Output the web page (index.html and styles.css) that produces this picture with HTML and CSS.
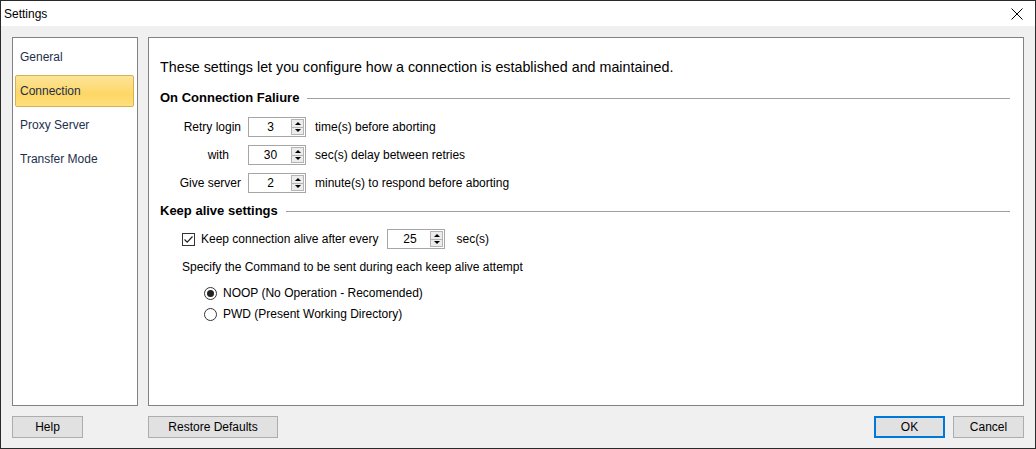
FILE: index.html
```html
<!DOCTYPE html>
<html>
<head>
<meta charset="utf-8">
<link rel="stylesheet" href="styles.css">
</head>
<body>
<div class="window">
  <div class="titlebar">
    <span class="title">Settings</span>
    <svg class="close" width="12" height="12" viewBox="0 0 12 12"><path d="M0.5 0.5 L11.5 11.5 M11.5 0.5 L0.5 11.5" stroke="#000" stroke-width="1" fill="none"/></svg>
  </div>
  <div class="client">
    <div class="panels">
      <div class="nav">
        <div class="nav-item">General</div>
        <div class="nav-item selected">Connection</div>
        <div class="nav-item">Proxy Server</div>
        <div class="nav-item">Transfer Mode</div>
      </div>
      <div class="main">
        <div class="intro">These settings let you configure how a connection is established and maintained.</div>
        <div class="section-head h1"><span>On Connection Faliure</span><div class="rule"></div></div>
        <div class="rows">
          <div class="row">
            <div class="lbl">Retry login</div>
            <div class="spin"><div class="val">3</div><div class="btns"><div class="b up"></div><div class="b down"></div></div></div>
            <div class="after">time(s) before aborting</div>
          </div>
          <div class="row">
            <div class="lbl with">with</div>
            <div class="spin"><div class="val">30</div><div class="btns"><div class="b up"></div><div class="b down"></div></div></div>
            <div class="after">sec(s) delay between retries</div>
          </div>
          <div class="row">
            <div class="lbl">Give server</div>
            <div class="spin"><div class="val">2</div><div class="btns"><div class="b up"></div><div class="b down"></div></div></div>
            <div class="after">minute(s) to respond before aborting</div>
          </div>
        </div>
        <div class="section-head h2"><span>Keep alive settings</span><div class="rule"></div></div>
        <div class="keep">
          <div class="check"><svg width="11" height="11" viewBox="0 0 11 11"><path d="M1.5 5.5 L4.2 8.2 L9.5 2.5" stroke="#222" stroke-width="1.2" fill="none"/></svg></div>
          <div class="keep-text">Keep connection alive after every</div>
          <div class="spin"><div class="val">25</div><div class="btns"><div class="b up"></div><div class="b down"></div></div></div>
          <div class="keep-after">sec(s)</div>
        </div>
        <div class="specify">Specify the Command to be sent during each keep alive attempt</div>
        <div class="radios">
          <div class="radio-row"><div class="radio on"></div><span>NOOP (No Operation - Recomended)</span></div>
          <div class="radio-row"><div class="radio"></div><span>PWD (Present Working Directory)</span></div>
        </div>
      </div>
    </div>
    <div class="buttons">
      <div class="btn help">Help</div>
      <div class="btn restore">Restore Defaults</div>
      <div class="spacer"></div>
      <div class="btn ok">OK</div>
      <div class="btn cancel">Cancel</div>
    </div>
  </div>
</div>
</body>
</html>
```

FILE: styles.css
```css
* { box-sizing: border-box; }
html, body { margin: 0; padding: 0; }
body {
  width: 1036px;
  height: 449px;
  font-family: "Liberation Sans", Arial, sans-serif;
  font-size: 12px;
  color: #000;
  overflow: hidden;
}
.window {
  width: 1036px;
  height: 449px;
  border: 1px solid #2a2a2a;
  display: flex;
  flex-direction: column;
  background: #f0f0f0;
}
.titlebar {
  height: 25px;
  background: #fff;
  display: flex;
  align-items: center;
  padding-left: 3px;
  padding-right: 12px;
}
.title { flex: 1; font-size: 12px; }
.close { display: block; }
.client {
  flex: 1;
  display: flex;
  flex-direction: column;
  padding: 11px 11px 0 11px;
}
.panels {
  display: flex;
  gap: 10px;
  height: 369px;
}
.nav {
  width: 126px;
  border: 1px solid #828282;
  background: #fff;
  padding-top: 3px;
  display: flex;
  flex-direction: column;
  gap: 2px;
}
.nav-item {
  height: 32px;
  margin: 0 3px 0 2px;
  padding-left: 4px;
  display: flex;
  align-items: center;
  color: #1e2f4d;
  border: 1px solid transparent;
  font-size: 12px;
}
.nav-item.selected {
  background: linear-gradient(#fde49a, #fdd766 60%, #fde07e);
  border: 1px solid #d7b254;
  border-radius: 2px;
}
.main {
  flex: 1;
  border: 1px solid #828282;
  background: #fff;
  padding: 20px 13px 0 11px;
  display: flex;
  flex-direction: column;
}
.intro {
  font-size: 14.3px;
  line-height: 18px;
  height: 18px;
}
.section-head {
  display: flex;
  align-items: center;
  font-weight: bold;
  font-size: 13px;
  line-height: 16px;
  height: 16px;
}
.section-head .rule {
  flex: 1;
  height: 1px;
  background: #a0a0a0;
  margin-left: 8px;
}
.h1 { margin-top: 14px; }
.h2 { margin-top: 10px; }
.rows {
  margin-top: 11px;
  display: flex;
  flex-direction: column;
  gap: 8px;
  padding-left: 10px;
}
.row {
  display: flex;
  align-items: center;
  height: 20px;
}
.lbl {
  width: 71px;
  text-align: right;
}
.lbl.with { padding-right: 12px; }
.row .spin { margin-left: 7px; }
.after { margin-left: 9px; }
.spin {
  width: 58px;
  height: 20px;
  border: 1px solid #a6a6a6;
  background: #fff;
  display: flex;
  font-size: 12px;
}
.val {
  flex: 1;
  display: flex;
  align-items: center;
  justify-content: center;
  padding-left: 1px;
}
.btns {
  width: 13px;
  margin: 1px 1px 1px 0;
  display: flex;
  flex-direction: column;
}
.b {
  flex: 1;
  background: #ececec;
  border: 1px solid #b4b4b4;
  display: flex;
  align-items: center;
  justify-content: center;
}
.b + .b { border-top: none; }
.b::after {
  content: "";
  width: 0;
  height: 0;
  border-left: 3px solid transparent;
  border-right: 3px solid transparent;
}
.up::after { border-bottom: 3px solid #000; }
.down::after { border-top: 3px solid #000; }
.keep {
  margin-top: 10px;
  padding-left: 22px;
  display: flex;
  align-items: center;
  height: 20px;
}
.check {
  width: 13px;
  height: 13px;
  border: 1px solid #333;
  background: #fff;
  display: flex;
  align-items: center;
  justify-content: center;
}
.check svg { display: block; }
.keep-text { margin-left: 6px; }
.keep .spin { margin-left: 9px; }
.keep-after { margin-left: 11px; }
.specify {
  margin-top: 10px;
  padding-left: 22px;
  line-height: 16px;
  height: 16px;
}
.radios {
  margin-top: 10px;
  padding-left: 44px;
  display: flex;
  flex-direction: column;
  gap: 5px;
}
.radio-row {
  display: flex;
  align-items: center;
  height: 16px;
}
.radio {
  width: 13px;
  height: 13px;
  border: 1px solid #333;
  border-radius: 50%;
  background: #fff;
  display: flex;
  align-items: center;
  justify-content: center;
}
.radio.on::after {
  content: "";
  width: 7px;
  height: 7px;
  border-radius: 50%;
  background: #222;
}
.radio-row span { margin-left: 6px; }
.buttons {
  margin-top: 10px;
  display: flex;
  height: 22px;
}
.btn {
  height: 22px;
  background: #e1e1e1;
  border: 1px solid #adadad;
  display: flex;
  align-items: center;
  justify-content: center;
  font-size: 12px;
}
.help { width: 71px; }
.restore { width: 130px; margin-left: 65px; }
.spacer { flex: 1; }
.ok { width: 71px; border: 2px solid #0078d7; }
.cancel { width: 71px; margin-left: 8px; }
```
